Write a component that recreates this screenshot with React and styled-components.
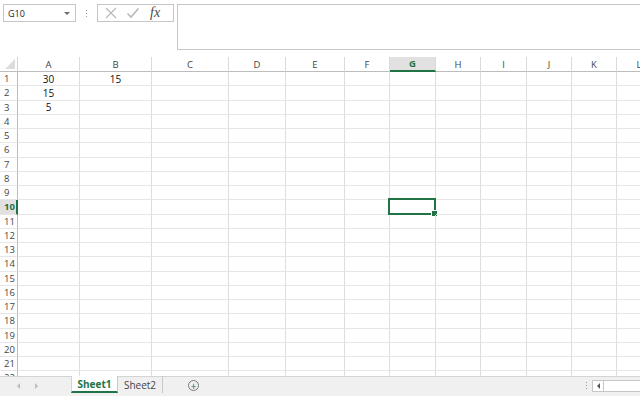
import React from 'react'
import styled, { createGlobalStyle } from 'styled-components'

const GlobalStyle = createGlobalStyle`
  html, body {
    margin: 0;
    padding: 0;
    background: #fff;
  }
  body {
    font-family: 'Open Sans', 'Noto Sans', sans-serif;
  }
`

const columns = [
  { name: 'A', width: 62 },
  { name: 'B', width: 72 },
  { name: 'C', width: 77 },
  { name: 'D', width: 57 },
  { name: 'E', width: 59 },
  { name: 'F', width: 45 },
  { name: 'G', width: 46 },
  { name: 'H', width: 45 },
  { name: 'I', width: 46 },
  { name: 'J', width: 45 },
  { name: 'K', width: 45 },
  { name: 'L', width: 45 },
]

const data = {
  A1: '30',
  B1: '15',
  A2: '15',
  A3: '5',
}

const ROWS = 22
const ACTIVE_COL = 'G'
const ACTIVE_ROW = 10

const Window = styled.div`
  width: 640px;
  height: 396px;
  display: flex;
  flex-direction: column;
  overflow: hidden;
  background: #fff;
`

const FormulaRow = styled.div`
  height: 57px;
  flex-shrink: 0;
  display: flex;
  align-items: flex-start;
  padding: 4px 0 0 3px;
  box-sizing: border-box;
`

const NameBox = styled.div`
  width: 73px;
  height: 18px;
  box-sizing: border-box;
  border: 1px solid #c6c6c6;
  display: flex;
  align-items: center;
  justify-content: space-between;
  padding: 0 5px 0 4px;
  font-size: 9px;
  color: #262626;
`

const Caret = styled.span`
  width: 0;
  height: 0;
  border-left: 3px solid transparent;
  border-right: 3px solid transparent;
  border-top: 3px solid #6a6a6a;
`

const Grip = styled.div`
  width: 21px;
  height: 18px;
  display: flex;
  flex-direction: column;
  align-items: center;
  justify-content: center;
  gap: 2px;
  span {
    width: 1px;
    height: 1px;
    background: #9a9a9a;
  }
`

const FxGroup = styled.div`
  width: 77px;
  height: 18px;
  box-sizing: border-box;
  border: 1px solid #c6c6c6;
  display: flex;
  align-items: center;
  padding-left: 6px;
  gap: 8px;
`

const FxLabel = styled.span`
  font-family: 'Liberation Serif', 'DejaVu Serif', serif;
  font-style: italic;
  font-size: 14px;
  color: #4a4a4a;
  margin-left: 2px;
  line-height: 1;
`

const FormulaInput = styled.div`
  flex: 1;
  margin-left: 3px;
  height: 46px;
  box-sizing: border-box;
  border: 1px solid #c6c6c6;
  border-right: none;
`

const Sheet = styled.div`
  flex: 1;
  overflow: hidden;
  display: grid;
  grid-template-columns: 18px ${columns.map(c => `${c.width}px`).join(' ')};
  grid-template-rows: 15px repeat(${ROWS}, 14.25px);
  align-content: start;
  font-size: 10px;
`

const Corner = styled.div`
  box-sizing: border-box;
  border-right: 1px solid #d4d4d4;
  border-bottom: 1px solid #bcbcbc;
  position: relative;
  &:after {
    content: '';
    position: absolute;
    right: 2px;
    bottom: 2px;
    border-left: 10px solid transparent;
    border-bottom: 10px solid #dcdcdc;
  }
`

const ColHead = styled.div`
  box-sizing: border-box;
  border-right: 1px solid #dadada;
  border-bottom: ${({ active }) => (active ? '2px solid #217346' : '1px solid #bcbcbc')};
  background: ${({ active }) => (active ? '#e1e1e1' : '#fff')};
  color: ${({ active }) => (active ? '#217346' : '#444')};
  font-weight: ${({ active }) => (active ? 700 : 400)};
  font-size: 9.5px;
  display: flex;
  align-items: center;
  justify-content: center;
`

const RowHead = styled.div`
  box-sizing: border-box;
  border-bottom: 1px solid #e6e6e6;
  border-right: ${({ active }) => (active ? '2px solid #217346' : '1px solid #bcbcbc')};
  background: ${({ active }) => (active ? '#e1e1e1' : '#fff')};
  color: ${({ active }) => (active ? '#217346' : '#444')};
  font-weight: ${({ active }) => (active ? 700 : 400)};
  font-size: 9.5px;
  display: flex;
  align-items: center;
  padding-left: 4px;
`

const Cell = styled.div`
  box-sizing: border-box;
  border-right: 1px solid #dedede;
  border-bottom: 1px solid #e6e6e6;
  position: relative;
  font-family: 'Open Sans', 'Noto Sans', sans-serif;
  font-size: 10px;
  color: #111;
  display: flex;
  align-items: center;
  justify-content: center;
`

const Selection = styled.div`
  position: absolute;
  left: -2px;
  top: -2px;
  right: -1px;
  bottom: -1px;
  border: 2px solid #217346;
  pointer-events: none;
  &:after {
    content: '';
    position: absolute;
    right: -4px;
    bottom: -4px;
    width: 5px;
    height: 5px;
    background: #217346;
    border: 1px solid #fff;
  }
`

const TabBar = styled.div`
  height: 20px;
  flex-shrink: 0;
  background: #f0f0f0;
  border-top: 1px solid #d4d4d4;
  box-sizing: border-box;
  display: flex;
  align-items: flex-start;
  font-size: 10px;
`

const Nav = styled.div`
  width: 71px;
  height: 17px;
  display: flex;
  align-items: center;
  padding-left: 17px;
  gap: 15px;
  box-sizing: border-box;
`

const NavArrow = styled.span`
  width: 0;
  height: 0;
  border-top: 3px solid transparent;
  border-bottom: 3px solid transparent;
  ${({ right }) => (right ? 'border-left: 3px solid #bdbdbd;' : 'border-right: 3px solid #bdbdbd;')}
`

const Tab = styled.div`
  width: ${({ w }) => w}px;
  height: 17px;
  margin-top: -1px;
  box-sizing: border-box;
  display: flex;
  align-items: center;
  justify-content: center;
  background: ${({ active }) => (active ? '#fff' : 'transparent')};
  color: ${({ active }) => (active ? '#217346' : '#444')};
  font-weight: ${({ active }) => (active ? 700 : 400)};
  border-bottom: ${({ active }) => (active ? '2px solid #217346' : 'none')};
  border-left: ${({ active }) => (active ? '1px solid #d4d4d4' : 'none')};
  border-right: 1px solid #c8c8c8;
`

const AddSheet = styled.div`
  margin: 3px 0 0 25px;
  width: 11px;
  height: 11px;
  border-radius: 50%;
  border: 1px solid #7a7a7a;
  box-sizing: border-box;
  display: flex;
  align-items: center;
  justify-content: center;
  color: #555;
  font-size: 10px;
  line-height: 1;
`

const Spacer = styled.div`
  flex: 1;
`

const BarGrip = styled(Grip)`
  width: 12px;
  height: 17px;
`

const HScroll = styled.div`
  width: 48px;
  height: 12px;
  margin-top: 3px;
  box-sizing: border-box;
  border: 1px solid #c6c6c6;
  border-right: none;
  background: #fff;
  display: flex;
`

const ScrollBtn = styled.div`
  width: 10px;
  border-right: 1px solid #c6c6c6;
  display: flex;
  align-items: center;
  justify-content: center;
  &:after {
    content: '';
    border-top: 3px solid transparent;
    border-bottom: 3px solid transparent;
    border-right: 3px solid #555;
  }
`

const CrossIcon = () => (
  <svg width="14" height="14" viewBox="0 0 14 14">
    <path d="M2 2 L12 12 M12 2 L2 12" stroke="#b9b9b9" strokeWidth="1.2" fill="none" />
  </svg>
)

const CheckIcon = () => (
  <svg width="14" height="14" viewBox="0 0 14 14">
    <path d="M1.5 7.5 L5 11 L12.5 2.5" stroke="#b9b9b9" strokeWidth="1.6" fill="none" />
  </svg>
)

export default function App() {
  const rows = Array.from({ length: ROWS }, (_, i) => i + 1)

  return (
    <Window>
      <GlobalStyle />
      <FormulaRow>
        <NameBox>
          G10
          <Caret />
        </NameBox>
        <Grip>
          <span /><span /><span />
        </Grip>
        <FxGroup>
          <CrossIcon />
          <CheckIcon />
          <FxLabel>fx</FxLabel>
        </FxGroup>
        <FormulaInput />
      </FormulaRow>

      <Sheet>
        <Corner />
        {columns.map(c => (
          <ColHead key={c.name} active={c.name === ACTIVE_COL}>{c.name}</ColHead>
        ))}
        {rows.map(r => (
          <React.Fragment key={r}>
            <RowHead active={r === ACTIVE_ROW}>{r}</RowHead>
            {columns.map(c => {
              const id = `${c.name}${r}`
              return (
                <Cell key={id}>
                  {data[id]}
                  {c.name === ACTIVE_COL && r === ACTIVE_ROW && <Selection />}
                </Cell>
              )
            })}
          </React.Fragment>
        ))}
      </Sheet>

      <TabBar>
        <Nav>
          <NavArrow />
          <NavArrow right />
        </Nav>
        <Tab w={47} active>Sheet1</Tab>
        <Tab w={45}>Sheet2</Tab>
        <AddSheet>+</AddSheet>
        <Spacer />
        <BarGrip>
          <span /><span /><span />
        </BarGrip>
        <HScroll>
          <ScrollBtn />
        </HScroll>
      </TabBar>
    </Window>
  )
}
